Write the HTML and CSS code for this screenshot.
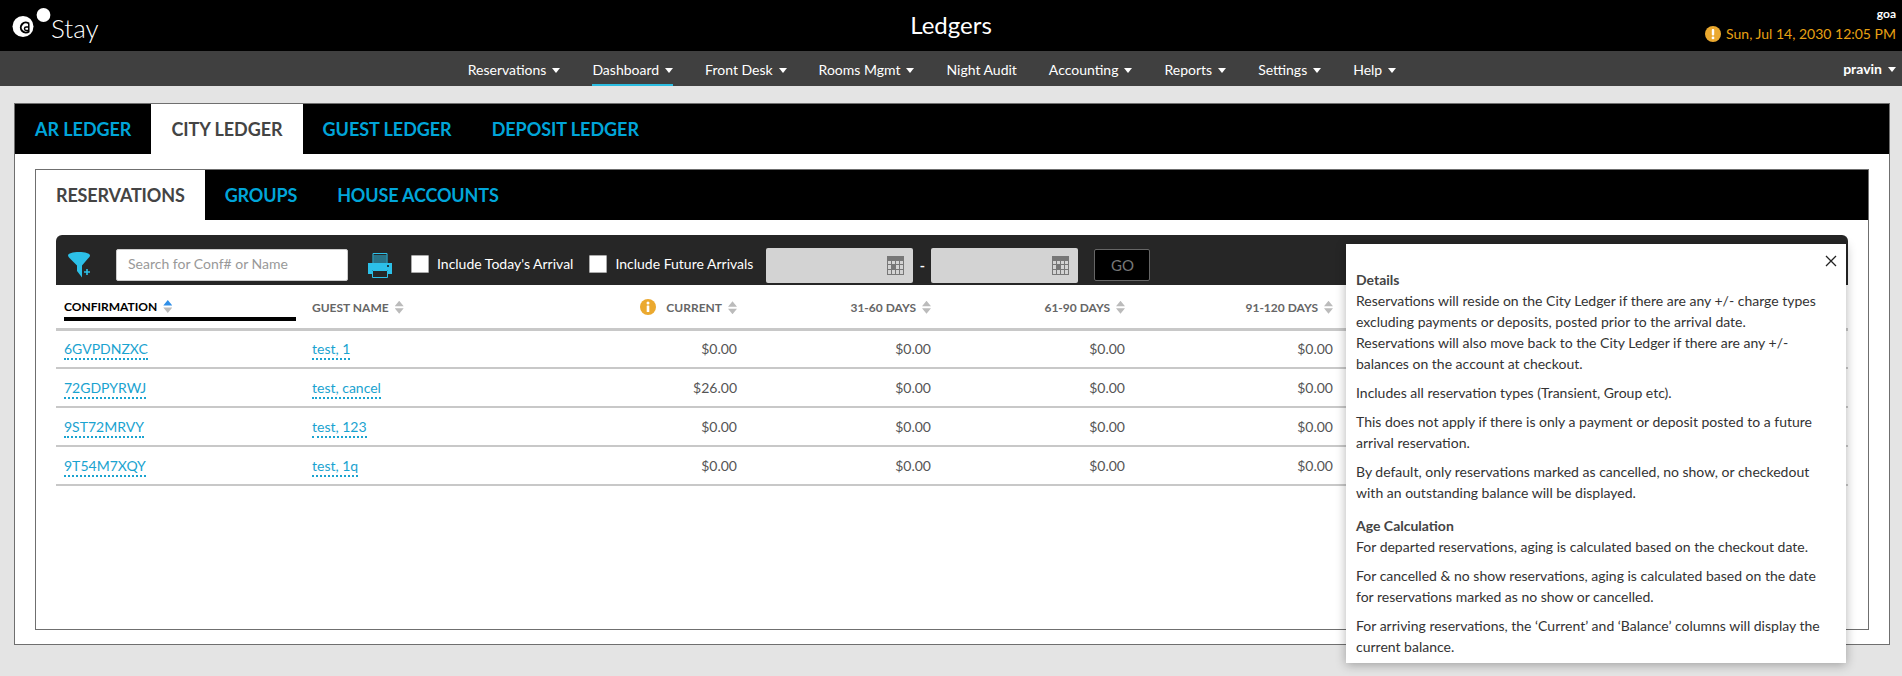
FILE: index.html
```html
<!DOCTYPE html>
<html lang="en">
<head>
    <meta charset="UTF-8">
    <title>Ledgers</title>
    <link rel="stylesheet" href="styles.css">
</head>
<body>
    <header class="topbar">
        <div class="logo">
            <svg width="51" height="40" viewBox="0 0 51 40">
                <circle cx="23" cy="26.500" r="10.500" fill="#fff"/>
                <circle cx="43.500" cy="15" r="6.900" fill="#fff"/>
                <path d="M29.200 23.800a5 5 0 1 0 0 7.400" fill="none" stroke="#000" stroke-width="2"/>
                <path d="M28.800 24v7.500M28.800 27h-2.600a1.600 1.600 0 0 0 0 3.400h2.600" fill="none" stroke="#000" stroke-width="1.500"/>
            </svg>
            <span class="logo-text">Stay</span>
        </div>
        <h1 class="page-title">Ledgers</h1>
        <div class="hotel-info">
            <div class="hotel-name">goa</div>
            <div class="hotel-date">
                <svg width="16" height="16" viewBox="0 0 16 16">
                    <circle cx="8" cy="8" r="8" fill="#eba92f"/>
                    <rect x="6.800" y="3" width="2.400" height="6.600" rx="1" fill="#fff"/>
                    <circle cx="8" cy="11.900" r="1.400" fill="#fff"/>
                </svg>
                <span>Sun, Jul 14, 2030 12:05 PM</span>
            </div>
        </div>
    </header>

    <nav class="navbar">
        <ul class="nav-list">
            <li class="nav-item caret">Reservations</li>
            <li class="nav-item caret active">Dashboard</li>
            <li class="nav-item caret">Front Desk</li>
            <li class="nav-item caret">Rooms Mgmt</li>
            <li class="nav-item">Night Audit</li>
            <li class="nav-item caret">Accounting</li>
            <li class="nav-item caret">Reports</li>
            <li class="nav-item caret">Settings</li>
            <li class="nav-item caret">Help</li>
        </ul>
        <div class="nav-user caret">pravin</div>
    </nav>

    <main class="panel">
        <div class="tabs">
            <a class="tab">AR LEDGER</a>
            <a class="tab selected">CITY LEDGER</a>
            <a class="tab">GUEST LEDGER</a>
            <a class="tab">DEPOSIT LEDGER</a>
        </div>

        <section class="subpanel">
            <div class="tabs subtabs">
                <a class="tab selected">RESERVATIONS</a>
                <a class="tab">GROUPS</a>
                <a class="tab">HOUSE ACCOUNTS</a>
            </div>

            <div class="toolbar">
                <svg class="filter-icon" width="24" height="26" viewBox="0 0 24 26">
                    <path d="M0 3.500C0 1.500 5 0 11 0s11 1.500 11 3.500c0 1-1 2-2 3l-6 7V25.500l-5-6.500v-5.500l-7-7c-1-1-2-2-2-3.500z" fill="#2cc0e8"/>
                    <path d="M19 17v6M16 20h6" stroke="#2cc0e8" stroke-width="1.600"/>
                </svg>
                <input class="search" type="text" placeholder="Search for Conf# or Name">
                <svg class="print-icon" width="24" height="25" viewBox="0 0 24 25">
                    <path d="M5 .5h14v11H5zM5.500 3h13M5.500 5h13M5.500 7h13M5.500 9h13" fill="none" stroke="#2cc0e8"/>
                    <path d="M0 10h24v11h-4v-4H4v4H0z" fill="#2cc0e8"/>
                    <circle cx="20" cy="13" r="1" fill="#111"/>
                    <path d="M4.500 17.500h15v7h-15z" fill="none" stroke="#2cc0e8"/>
                </svg>
                <label class="check"><span class="box"></span>Include Today's Arrival</label>
                <label class="check"><span class="box"></span>Include Future Arrivals</label>
                <div class="date-field">
                    <svg width="17" height="19" viewBox="0 0 17 19">
                        <rect width="17" height="19" fill="#777"/>
                        <path d="M1 5h3v3H1zM5 5h3v3H5zM9 5h3v3H9zM13 5h3v3h-3zM1 9h3v4H1zM9 9h3v4H9zM13 9h3v4h-3zM1 14h3v4H1zM5 14h3v4H5zM9 14h3v4H9zM13 14h3v4h-3z" fill="#d3d3d3"/>
                    </svg>
                </div>
                <span class="date-sep">-</span>
                <div class="date-field">
                    <svg width="17" height="19" viewBox="0 0 17 19">
                        <rect width="17" height="19" fill="#777"/>
                        <path d="M1 5h3v3H1zM5 5h3v3H5zM9 5h3v3H9zM13 5h3v3h-3zM1 9h3v4H1zM9 9h3v4H9zM13 9h3v4h-3zM1 14h3v4H1zM5 14h3v4H5zM9 14h3v4H9zM13 14h3v4h-3z" fill="#d3d3d3"/>
                    </svg>
                </div>
                <button class="go-btn">GO</button>
            </div>

            <table class="ledger">
                <colgroup>
                    <col class="col-conf">
                    <col class="col-guest">
                    <col class="col-current">
                    <col class="col-days">
                    <col class="col-days">
                    <col class="col-days-last">
                    <col>
                </colgroup>
                <thead>
                    <tr>
                        <th class="sorted"><span class="sorted-label">CONFIRMATION<i class="sort up"></i></span></th>
                        <th>GUEST NAME<i class="sort"></i></th>
                        <th class="num">
                            <svg class="info-icon" width="16" height="16" viewBox="0 0 16 16">
                                <circle cx="8" cy="8" r="8" fill="#eba92f"/>
                                <circle cx="8" cy="4" r="1.500" fill="#fff"/>
                                <rect x="6.700" y="6.500" width="2.600" height="6.500" rx=".6" fill="#fff"/>
                            </svg>
                            CURRENT<i class="sort"></i>
                        </th>
                        <th class="num">31-60 DAYS<i class="sort"></i></th>
                        <th class="num">61-90 DAYS<i class="sort"></i></th>
                        <th class="num">91-120 DAYS<i class="sort"></i></th>
                        <th></th>
                    </tr>
                </thead>
                <tbody>
                    <tr>
                        <td><a class="link">6GVPDNZXC</a></td>
                        <td><a class="link">test, 1</a></td>
                        <td class="num">$0.00</td>
                        <td class="num">$0.00</td>
                        <td class="num">$0.00</td>
                        <td class="num">$0.00</td>
                        <td></td>
                    </tr>
                    <tr>
                        <td><a class="link">72GDPYRWJ</a></td>
                        <td><a class="link">test, cancel</a></td>
                        <td class="num">$26.00</td>
                        <td class="num">$0.00</td>
                        <td class="num">$0.00</td>
                        <td class="num">$0.00</td>
                        <td></td>
                    </tr>
                    <tr>
                        <td><a class="link">9ST72MRVY</a></td>
                        <td><a class="link">test, 123</a></td>
                        <td class="num">$0.00</td>
                        <td class="num">$0.00</td>
                        <td class="num">$0.00</td>
                        <td class="num">$0.00</td>
                        <td></td>
                    </tr>
                    <tr>
                        <td><a class="link">9T54M7XQY</a></td>
                        <td><a class="link">test, 1q</a></td>
                        <td class="num">$0.00</td>
                        <td class="num">$0.00</td>
                        <td class="num">$0.00</td>
                        <td class="num">$0.00</td>
                        <td></td>
                    </tr>
                </tbody>
            </table>
        </section>
    </main>

    <!-- Details popup over the table -->
    <aside class="popup">
        <svg class="popup-close" width="12" height="12" viewBox="0 0 12 12">
            <path d="M1 1l10 10M11 1L1 11" stroke="#222" stroke-width="1.300"/>
        </svg>
        <h4>Details</h4>
        <p>Reservations will reside on the City Ledger if there are any +/- charge types excluding payments or deposits, posted prior to the arrival date.<br>Reservations will also move back to the City Ledger if there are any +/- balances on the account at checkout.</p>
        <p>Includes all reservation types (Transient, Group etc).</p>
        <p>This does not apply if there is only a payment or deposit posted to a future arrival reservation.</p>
        <p>By default, only reservations marked as cancelled, no show, or checkedout with an outstanding balance will be displayed.</p>
        <h4 class="second">Age Calculation</h4>
        <p>For departed reservations, aging is calculated based on the checkout date.</p>
        <p>For cancelled &amp; no show reservations, aging is calculated based on the date for reservations marked as no show or cancelled.</p>
        <p>For arriving reservations, the ‘Current’ and ‘Balance’ columns will display the current balance.</p>
    </aside>
</body>
</html>
```

FILE: styles.css
```css
* {
    box-sizing: border-box;
}

body {
    margin: 0;
    height: 676px;
    overflow: hidden;
    background-color: #e4e4e4;
    font-family: Lato, "Open Sans", sans-serif;
    font-size: 14px;
    color: #444;
}

/* Top bar */
.topbar {
    display: grid;
    grid-template-columns: 1fr auto 1fr;
    align-items: center;
    height: 51px;
    background-color: black;
    color: white;
}

.logo {
    display: flex;
    align-items: flex-start;
    height: 51px;
}

.logo-text {
    font-size: 26px;
    font-weight: 300;
    line-height: 30px;
    margin-top: 13px;
}

.page-title {
    margin: 0 0 2px 0;
    font-size: 24px;
    font-weight: 400;
}

.hotel-info {
    justify-self: end;
    padding-right: 6px;
    text-align: right;
}

.hotel-name {
    font-size: 12px;
    font-weight: 700;
    line-height: 14px;
}

.hotel-date {
    display: flex;
    align-items: center;
    justify-content: flex-end;
    gap: 5px;
    margin-top: 3px;
    font-size: 14px;
    line-height: 20px;
    color: #e8a013;
}

/* Main menu */
.navbar {
    position: relative;
    display: flex;
    justify-content: center;
    height: 35px;
    padding-right: 38px;
    background-color: #404040;
    color: white;
}

.nav-list {
    display: flex;
    gap: 32px;
    margin: 0;
    padding: 0;
    list-style: none;
}

.nav-item {
    height: 35px;
    font-size: 14px;
    line-height: 37px;
    white-space: nowrap;
}

.caret::after {
    content: "";
    display: inline-block;
    margin-left: 6px;
    vertical-align: 2px;
    border-left: 4px solid transparent;
    border-right: 4px solid transparent;
    border-top: 5px solid white;
}

.nav-item.active {
    box-shadow: inset 0 -2px 0 #2bbce0;
}

.nav-user {
    position: absolute;
    right: 6px;
    top: 0;
    font-size: 14px;
    font-weight: 700;
    line-height: 36px;
}

/* Panels and tabs */
.panel {
    margin: 17px 12px 0 14px;
    height: 542px;
    background-color: white;
    border: 1px solid #6f6f6f;
}

.tabs {
    display: flex;
    height: 50px;
    background-color: black;
}

.tab {
    display: block;
    padding: 0 20px;
    font-size: 18px;
    font-weight: 700;
    letter-spacing: -0.05px;
    line-height: 50px;
    color: #00a5d9;
    white-space: nowrap;
}

.tab.selected {
    background-color: white;
    color: #444;
}

.subpanel {
    height: 461px;
    margin: 15px 20px 0 20px;
    padding: 0 20px;
    border: 1px solid #6f6f6f;
}

.subtabs {
    margin: 0 -20px;
}

.subtabs .tab {
    letter-spacing: -0.15px;
}

/* Filter strip */
.toolbar {
    display: flex;
    align-items: center;
    height: 50px;
    margin-top: 15px;
    padding: 10px 0 0 12px;
    background-color: #262626;
    border-radius: 6px 6px 0 0;
    color: white;
}

.search {
    width: 232px;
    height: 32px;
    margin-left: 24px;
    padding: 0 11px 3px 11px;
    border: 1px solid #ccc;
    border-radius: 2px;
    font-family: inherit;
    font-size: 14px;
}

.search::placeholder {
    color: #999;
}

.print-icon {
    margin-left: 20px;
}

.check {
    display: flex;
    align-items: center;
    margin: -3px 0 0 19px;
    font-size: 14px;
    white-space: nowrap;
}

.check + .check {
    margin-left: 16px;
}

.box {
    width: 18px;
    height: 18px;
    margin-right: 8px;
    background-color: white;
    border: 1px solid #aaa;
    border-radius: 1px;
}

.date-field {
    display: flex;
    align-items: center;
    justify-content: flex-end;
    width: 147px;
    height: 35px;
    margin-left: 13px;
    padding-right: 9px;
    background-color: #d3d3d3;
    border-radius: 2px;
}

.date-sep {
    width: 18px;
    margin-right: -13px;
    text-align: center;
    font-weight: 700;
}

.go-btn {
    width: 56px;
    height: 32px;
    margin-left: 16px;
    background-color: black;
    border: 1px solid #666;
    border-radius: 2px;
    font-family: inherit;
    font-size: 15px;
    color: #777;
}

/* Ledger table */
.ledger {
    width: 100%;
    table-layout: fixed;
    border-collapse: collapse;
}

.col-conf {
    width: 248px;
}

.col-guest {
    width: 250px;
}

.col-current {
    width: 191px;
}

.col-days {
    width: 194px;
}

.col-days-last {
    width: 208px;
}

.ledger th {
    height: 44px;
    padding: 2px 8px 0 8px;
    border-bottom: 3px solid #c8c8c8;
    font-size: 12px;
    font-weight: 700;
    text-align: left;
    color: #666;
    white-space: nowrap;
}

.ledger td {
    height: 39px;
    padding: 0 8px;
    border-bottom: 2px solid #c8c8c8;
    font-size: 14px;
    color: #555;
}

.ledger .num {
    text-align: right;
}

.sorted-label {
    display: block;
    height: 28px;
    padding-top: 5px;
    border-bottom: 4px solid black;
    color: black;
    line-height: 18px;
}

.ledger th.sorted {
    vertical-align: top;
    padding-top: 8px;
}

.sort {
    display: inline-block;
    width: 9px;
    height: 13px;
    margin-left: 6px;
    vertical-align: -2px;
    background: #bbb;
    clip-path: polygon(50% 0, 100% 42%, 50% 42%, 50% 58%, 100% 58%, 50% 100%, 0 58%, 50% 58%, 50% 42%, 0 42%);
}

.sort.up {
    background: linear-gradient(#2f8fe8 50%, #bbb 50%);
}

.info-icon {
    margin-right: 7px;
    vertical-align: -3px;
}

.link {
    padding-bottom: 1px;
    border-bottom: 2px dotted #1aa3d0;
    color: #1aa3d0;
}

/* Popup */
.popup {
    position: absolute;
    left: 1346px;
    top: 244px;
    width: 500px;
    height: 419px;
    padding: 25px 10px 0 10px;
    background-color: white;
    box-shadow: 0 2px 10px rgba(0, 0, 0, 0.3);
    font-size: 14px;
    line-height: 21px;
    color: #333;
}

.popup-close {
    position: absolute;
    right: 9px;
    top: 11px;
}

.popup h4 {
    margin: 0;
    font-size: 14px;
    font-weight: 700;
    color: #444;
}

.popup h4.second {
    margin-top: 12px;
}

.popup p {
    margin: 0 0 8px 0;
}
```
